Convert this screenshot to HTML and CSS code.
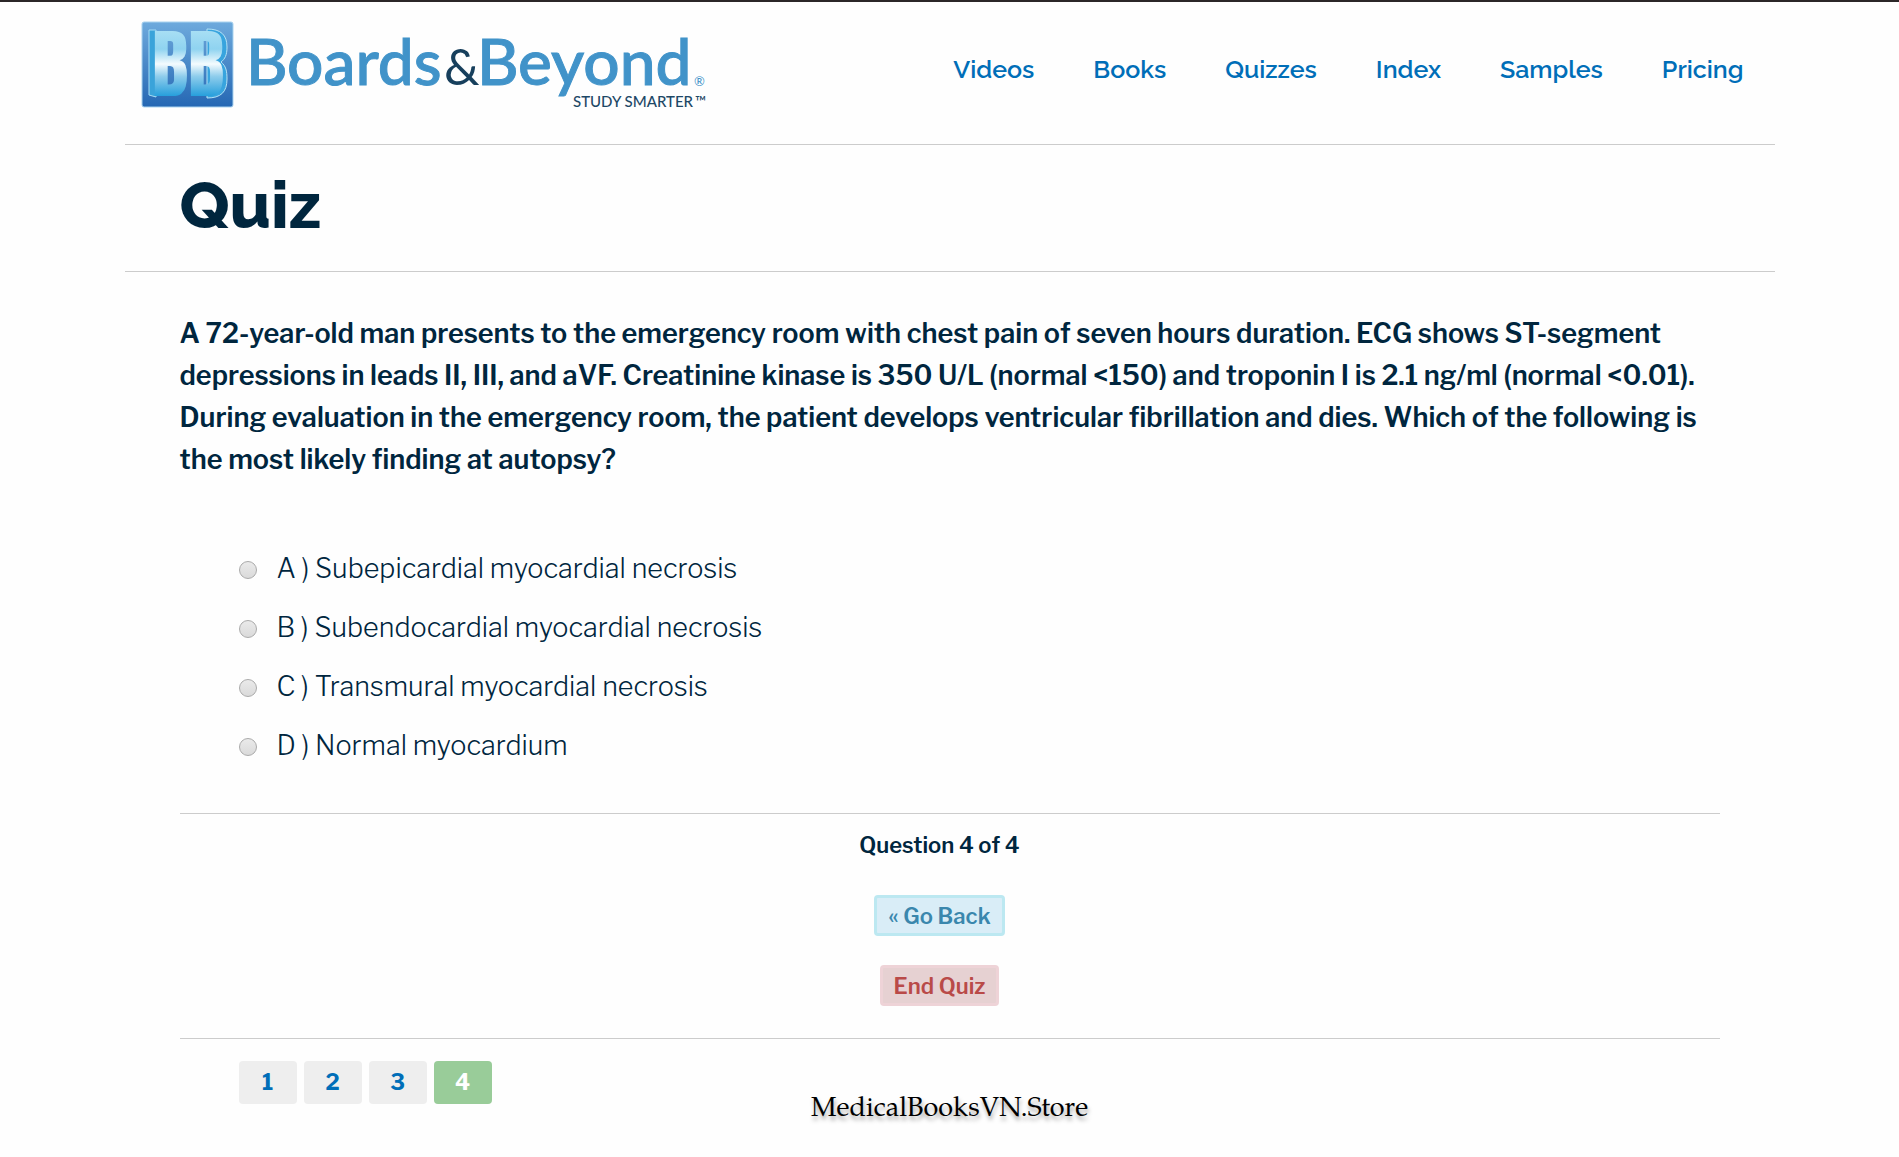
FILE: index.html
```
<!DOCTYPE html>
<html lang="en">
<head>
<meta charset="utf-8">
<meta name="viewport" content="width=device-width, initial-scale=1">
<title>Quiz - Boards &amp; Beyond</title>
<link rel="stylesheet" href="styles.css">
</head>
<body>
<div class="page">
  <header class="site-header">
    <a class="logo" href="#" aria-label="Boards and Beyond home">
      <svg width="570" height="92" viewBox="0 0 570 92">
        <defs>
          <linearGradient id="tile" x1="0" y1="0" x2="0" y2="1">
            <stop offset="0" stop-color="#6eaadd"/>
            <stop offset="1" stop-color="#2567b3"/>
          </linearGradient>
          <linearGradient id="face" gradientUnits="userSpaceOnUse" x1="0" y1="9" x2="0" y2="77">
            <stop offset="0" stop-color="#a9dff4"/>
            <stop offset="0.28" stop-color="#8fd3f0"/>
            <stop offset="0.5" stop-color="#f4fbfe"/>
            <stop offset="0.68" stop-color="#8fcdec"/>
            <stop offset="1" stop-color="#1c9ada"/>
          </linearGradient>
        </defs>
        <rect x="1" y="1" width="91" height="85" rx="2" fill="url(#tile)" stroke="#a9d3ef"/>
        <path d="M8 9H15V76L8 74Z" fill="#3aa3da" stroke="#a5dcf4"/>
        <path d="M66 8C80 8 86 14 86 26C86 34 84 38 80 41C85 45 86 50 86 58C86 71 80 77 66 77Z" fill="#38a4de" stroke="#b5e3f6"/>
        <g class="monogram" fill="url(#face)">
          <text x="11" y="75">B</text>
          <text x="47" y="75">B</text>
        </g>
        <g class="wordmark">
          <text x="105" y="64">Boards</text>
          <text x="336" y="64">Beyond</text>
        </g>
        <text class="ampersand" x="303" y="64">&amp;</text>
        <text class="registered" x="553" y="65">®</text>
        <text class="tagline" x="432" y="86">STUDY SMARTER</text>
        <text class="trademark" x="554" y="86">™</text>
      </svg>
    </a>
    <nav class="main-nav">
      <a href="#">Videos</a>
      <a href="#">Books</a>
      <a href="#">Quizzes</a>
      <a href="#">Index</a>
      <a href="#">Samples</a>
      <a href="#">Pricing</a>
    </nav>
  </header>

  <div class="title-bar">
    <h1>Quiz</h1>
  </div>

  <main class="content">
    <form>
      <fieldset class="question">
        <legend>A 72-year-old man presents to the emergency room with chest pain of seven hours duration. ECG shows ST-segment depressions in leads II, III, and aVF. Creatinine kinase is 350 U/L (normal &lt;150) and troponin I is 2.1 ng/ml (normal &lt;0.01). During evaluation in the emergency room, the patient develops ventricular fibrillation and dies. Which of the following is the most likely finding at autopsy?</legend>
        <div class="answers">
          <label><input type="radio" name="answer" value="A">A ) Subepicardial myocardial necrosis</label>
          <label><input type="radio" name="answer" value="B">B ) Subendocardial myocardial necrosis</label>
          <label><input type="radio" name="answer" value="C">C ) Transmural myocardial necrosis</label>
          <label><input type="radio" name="answer" value="D">D ) Normal myocardium</label>
        </div>
      </fieldset>
      <div class="actions">
        <p>Question 4 of 4</p>
        <button type="button" class="back">« Go Back</button>
        <button type="submit" class="end">End Quiz</button>
      </div>
    </form>
    <nav class="pager" aria-label="Questions">
      <a href="#">1</a>
      <a href="#">2</a>
      <a href="#">3</a>
      <a href="#" class="current" aria-current="page">4</a>
    </nav>
  </main>
</div>
<footer class="watermark">MedicalBooksVN.Store</footer>
</body>
</html>
```
FILE: styles.css
```
* {
  box-sizing: border-box;
}

body {
  margin: 0;
  border-top: 2px solid #2b2728;
  background: #fefefe;
  color: #00263e;
  font-family: "Libre Franklin", "Roboto", sans-serif;
}

.page {
  max-width: 1650px;
  margin: 0 auto;
}

.site-header {
  display: flex;
  justify-content: space-between;
  align-items: flex-start;
  min-height: 143px;
  padding: 19px 31px 0 16px;
  border-bottom: 1px solid #ccc;
}

.logo svg {
  display: block;
  overflow: visible;
}

.monogram {
  font-family: "Anton", "Bebas Neue", "Oswald", "Roboto Condensed", "Open Sans Condensed", sans-serif;
  font-size: 76px;
}

.wordmark {
  font-family: "Lato", sans-serif;
  font-size: 64px;
  font-weight: 500;
  fill: #4193c9;
  stroke: #4193c9;
}

.ampersand {
  font-family: "Lato", sans-serif;
  font-size: 50px;
  fill: #173f5c;
}

.registered {
  font-family: "Lato", sans-serif;
  font-size: 13px;
  fill: #4193c9;
}

.tagline,
.trademark {
  font-family: "Lato", sans-serif;
  font-size: 15px;
  font-weight: 500;
  fill: #1d4866;
}

.main-nav {
  display: flex;
  gap: 59px;
  padding-top: 28px;
}

.main-nav a {
  color: #006eb8;
  font-family: "Raleway", "Lato", sans-serif;
  font-size: 25px;
  font-weight: 600;
  line-height: 40px;
  text-decoration: none;
}

.title-bar {
  padding: 20px 55px 26px;
  border-bottom: 1px solid #ccc;
}

h1 {
  margin: 0;
  font-family: "Raleway", "Lato", sans-serif;
  font-size: 66px;
  font-weight: 800;
  line-height: 80px;
}

.content {
  padding: 41px 55px;
}

.question {
  margin: 0;
  padding: 0;
  border: 0;
}

.question legend {
  padding: 0;
  font-size: 27px;
  font-weight: 600;
  line-height: 42px;
}

.answers {
  display: flex;
  flex-direction: column;
  align-items: flex-start;
  padding: 58px 59px 38px;
}

.answers label {
  display: flex;
  align-items: center;
  gap: 20px;
  font-size: 27px;
  font-weight: 300;
  line-height: 59px;
}

.answers input {
  appearance: none;
  width: 18px;
  height: 18px;
  margin: 2px 0 0;
  border: 1px solid #aaa;
  border-radius: 50%;
  background: linear-gradient(#eaeaea, #dadada);
}

.answers input:checked {
  background: radial-gradient(#555 35%, #ddd 40%);
}

.actions {
  display: flex;
  flex-direction: column;
  align-items: center;
  padding: 10px 20px 32px 0;
  border: solid #ccc;
  border-width: 1px 0;
}

.actions p {
  margin: 0 0 29px;
  font-size: 22px;
  font-weight: 600;
  line-height: 42px;
}

.actions button {
  height: 41px;
  padding: 0 11px;
  border: 3px solid;
  border-radius: 4px;
  font: 600 22px/32px "Libre Franklin", "Roboto", sans-serif;
}

.actions .back {
  margin-bottom: 29px;
  border-color: #bce8f1;
  background: #d9edf7;
  color: #3a87ad;
}

.actions .end {
  border-color: #eed3d7;
  background: #e6d1d2;
  color: #b94a48;
}

.pager {
  display: flex;
  gap: 7px;
  padding: 22px 59px 0;
}

.pager a {
  min-width: 58px;
  border-radius: 4px;
  background: #eee;
  color: #006eb8;
  font-size: 22px;
  font-weight: 700;
  line-height: 43px;
  text-align: center;
  text-decoration: none;
}

.pager .current {
  background: #9c9;
  color: #fff;
}

.watermark {
  margin-top: -53px;
  color: #000;
  font-family: "Palatino Linotype", "Book Antiqua", "TeX Gyre Pagella", "Palatino", "Liberation Serif", serif;
  font-size: 27px;
  line-height: 36px;
  text-align: center;
  text-shadow: 1px 4px 4px rgba(0, 0, 0, 0.35);
}
```
